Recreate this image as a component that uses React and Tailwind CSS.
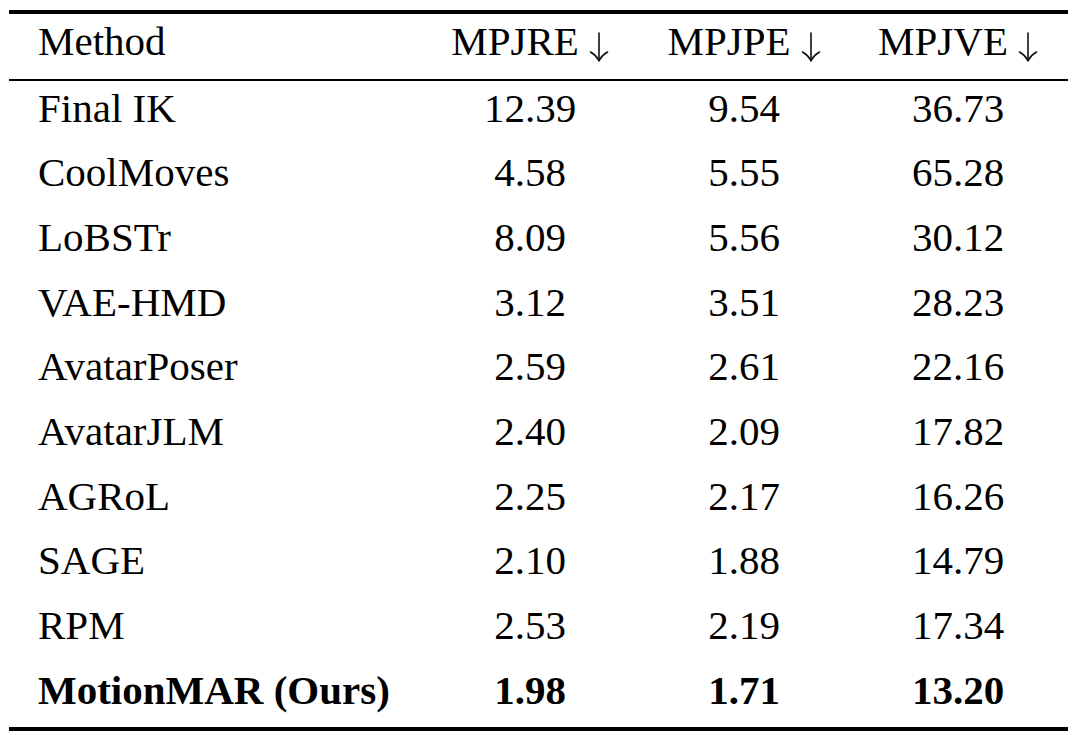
import React from "react";

const rows = [
  ["Final IK", "12.39", "9.54", "36.73"],
  ["CoolMoves", "4.58", "5.55", "65.28"],
  ["LoBSTr", "8.09", "5.56", "30.12"],
  ["VAE-HMD", "3.12", "3.51", "28.23"],
  ["AvatarPoser", "2.59", "2.61", "22.16"],
  ["AvatarJLM", "2.40", "2.09", "17.82"],
  ["AGRoL", "2.25", "2.17", "16.26"],
  ["SAGE", "2.10", "1.88", "14.79"],
  ["RPM", "2.53", "2.19", "17.34"],
];

function Arrow() {
  return (
    <svg
      width="20"
      height="30"
      viewBox="0 0 20 30"
      className="inline-block align-baseline ml-[10px] translate-y-[7px]"
      fill="none"
      stroke="#111"
      strokeWidth="1.6"
      strokeLinecap="round"
    >
      <path d="M10 1 V28.5" />
      <path d="M1.5 20 Q7 23 10 28.5 Q13 23 18.5 20" />
    </svg>
  );
}

const grid = "grid grid-cols-[411px_220px_208px_220px]";
const cell = "leading-[55px] pb-[9.67px] whitespace-nowrap";

export default function App() {
  return (
    <div className="w-[1080px] h-[735px] bg-white pt-[10px] pl-[9px] text-black text-[41px] [font-family:'Liberation_Serif','Times_New_Roman',serif]">
      <div className="w-[1059px]">
        <div className="h-[4px] bg-black" />
        <div className={grid}>
          <div className={`${cell} pl-[29px]`}>Method</div>
          <div className={`${cell} text-center`}>MPJRE<Arrow /></div>
          <div className={`${cell} text-center`}>MPJPE<Arrow /></div>
          <div className={`${cell} text-center`}>MPJVE<Arrow /></div>
        </div>
        <div className="h-[2px] bg-black" />
        {rows.map((r) => (
          <div key={r[0]} className={`${grid} h-[64.67px]`}>
            <div className={`${cell} pl-[29px]`}>{r[0]}</div>
            <div className={`${cell} text-center`}>{r[1]}</div>
            <div className={`${cell} text-center`}>{r[2]}</div>
            <div className={`${cell} text-center`}>{r[3]}</div>
          </div>
        ))}
        <div className={`${grid} h-[64.67px] font-bold`}>
          <div className={`${cell} pl-[29px]`}>MotionMAR (Ours)</div>
          <div className={`${cell} text-center`}>1.98</div>
          <div className={`${cell} text-center`}>1.71</div>
          <div className={`${cell} text-center`}>13.20</div>
        </div>
        <div className="h-[4px] bg-black" />
      </div>
    </div>
  );
}
